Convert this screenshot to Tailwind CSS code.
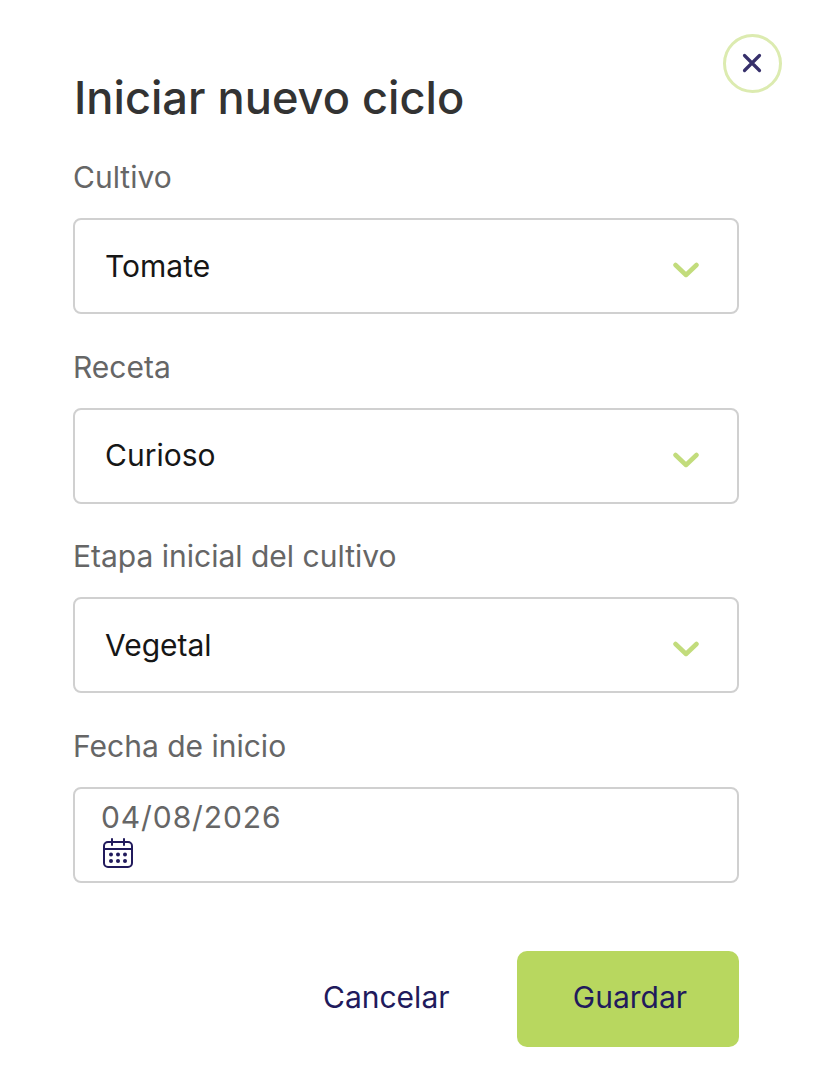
<!DOCTYPE html>
<html>
<head>
<meta charset="utf-8">
<script src="https://cdn.jsdelivr.net/npm/@tailwindcss/browser@4"></script>
</head>
<body class="bg-white font-['Inter',sans-serif]">
<div class="relative w-[822px] h-[1092px] pl-[73px] pr-[83px] pt-[70px] overflow-hidden">
  <button class="absolute left-[723px] top-[34px] w-[59px] h-[59px] rounded-full border-[3px] border-[#dcebb0] flex items-center justify-center">
    <svg width="22" height="22" viewBox="0 0 22 22" fill="none" stroke="#37306b" stroke-width="3.2" stroke-linecap="round" class="-ml-[2px] -mt-[2px]"><path d="M3.5 3.5 18.500 18.500M18.500 3.500 3.500 18.500"/></svg>
  </button>
  <h1 class="text-[45.200px] leading-[56px] font-medium text-[#333333] pl-[1px]">Iniciar nuevo ciclo</h1>
  <div class="mt-[32px] flex flex-col gap-[33.5px]">
    <div>
      <label class="block text-[30px] leading-[38px] text-[#666666]">Cultivo</label>
      <div class="mt-[22px] h-[96px] border-2 border-[#d0d0d0] rounded-[8px] pl-[30px] pr-[38px] flex items-center justify-between">
        <span class="text-[30px] text-[#161616]">Tomate</span>
        <svg width="26" height="16" viewBox="0 0 26 16" fill="none" stroke="#c2dc7c" stroke-width="4.5" stroke-linecap="round" stroke-linejoin="round" class="mt-[8px]"><path d="M2.5 3 13 13 23.5 3"/></svg>
      </div>
    </div>
    <div>
      <label class="block text-[30px] leading-[38px] text-[#666666]">Receta</label>
      <div class="mt-[22px] h-[96px] border-2 border-[#d0d0d0] rounded-[8px] pl-[30px] pr-[38px] flex items-center justify-between">
        <span class="text-[30px] text-[#161616]">Curioso</span>
        <svg width="26" height="16" viewBox="0 0 26 16" fill="none" stroke="#c2dc7c" stroke-width="4.5" stroke-linecap="round" stroke-linejoin="round" class="mt-[8px]"><path d="M2.5 3 13 13 23.5 3"/></svg>
      </div>
    </div>
    <div>
      <label class="block text-[30px] leading-[38px] text-[#666666]">Etapa inicial del cultivo</label>
      <div class="mt-[22px] h-[96px] border-2 border-[#d0d0d0] rounded-[8px] pl-[30px] pr-[38px] flex items-center justify-between">
        <span class="text-[30px] text-[#161616]">Vegetal</span>
        <svg width="26" height="16" viewBox="0 0 26 16" fill="none" stroke="#c2dc7c" stroke-width="4.5" stroke-linecap="round" stroke-linejoin="round" class="mt-[8px]"><path d="M2.5 3 13 13 23.5 3"/></svg>
      </div>
    </div>
    <div>
      <label class="block text-[30px] leading-[38px] text-[#666666]">Fecha de inicio</label>
      <div class="mt-[22px] h-[96px] border-2 border-[#d0d0d0] rounded-[8px] pl-[26px] pt-[10px] flex flex-col items-start">
        <span class="text-[30px] leading-[36px] tracking-[0.9px] text-[#666666]">04/08/2026</span>
        <svg width="32" height="32" viewBox="0 0 32 32" fill="none" stroke="#211a5c" stroke-width="2" stroke-linecap="round" class="mt-[2px] ml-[1px]">
          <rect x="2" y="5" width="28" height="25" rx="4"/>
          <path d="M2 12H30M10 2V8M22 2V8"/>
          <g fill="#211a5c" stroke="none">
            <circle cx="9" cy="17.500" r="2"/><circle cx="16" cy="17.500" r="2"/><circle cx="23" cy="17.500" r="2"/>
            <circle cx="9" cy="24" r="2"/><circle cx="16" cy="24" r="2"/><circle cx="23" cy="24" r="2"/>
          </g>
        </svg>
      </div>
    </div>
  </div>
  <div class="absolute left-[323px] top-[951px] flex items-center">
    <span class="text-[30px] text-[#211a5c] w-[194px] pb-[4px]">Cancelar</span>
    <button class="w-[222px] h-[96px] bg-[#b8d75f] rounded-[10px] text-[30px] text-[#211a5c] pl-[4px] pb-[4px]">Guardar</button>
  </div>
</div>
</body>
</html>
